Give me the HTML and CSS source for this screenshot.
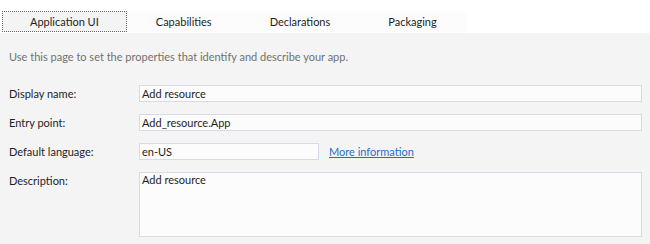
FILE: index.html
```html
<!DOCTYPE html>
<html lang="en">
  <head>
    <meta charset="UTF-8" />
    <title>Package.appxmanifest</title>
    <link rel="stylesheet" href="styles.css">
  </head>
  <body>
    <div class="tabs">
      <div class="tab active">Application UI</div>
      <div class="tab">Capabilities</div>
      <div class="tab">Declarations</div>
      <div class="tab">Packaging</div>
    </div>

    <div class="page">
      <p class="intro">Use this page to set the properties that identify and describe your app.</p>
      <div class="form">
        <label class="label">Display name:</label>
        <div class="field"><input type="text" class="box" value="Add resource" /></div>

        <label class="label">Entry point:</label>
        <div class="field"><input type="text" class="box" value="Add_resource.App" /></div>

        <label class="label">Default language:</label>
        <div class="field">
          <input type="text" class="box short" value="en-US" />
          <a href="#" class="link">More information</a>
        </div>

        <label class="label">Description:</label>
        <div class="field"><textarea class="box area">Add resource</textarea></div>
      </div>
    </div>
  </body>
</html>
```

FILE: styles.css
```css
body {
  margin: 0;
  font-family: Lato, "Noto Sans", sans-serif;
  font-size: 11px;
  color: #1e1e1e;
  background-color: #f4f4f4;
}
.tabs {
  display: flex;
  background-color: #fff;
  padding: 11px 0 0 2px;
}
.tab {
  height: 22px;
  line-height: 21px;
  padding: 0 29px;
  background-color: #fcfcfc;
  box-sizing: border-box;
}
.tab.active {
  background-color: #f4f4f4;
  border: 1px dotted #666;
  height: 21px;
  line-height: 19px;
  padding: 0 27px;
}
.page {
  padding: 16px 8px 0 9px;
}
.intro {
  margin: 0 0 20px 0;
  line-height: 16px;
  color: #717171;
}
.form {
  display: grid;
  grid-template-columns: 130px 1fr;
  row-gap: 12px;
}
.label {
  line-height: 17px;
}
.field {
  display: flex;
  align-items: center;
  gap: 10px;
}
.box {
  font-family: inherit;
  font-size: 11px;
  color: #1e1e1e;
  width: 100%;
  height: 17px;
  margin: 0;
  padding: 0 2px;
  box-sizing: border-box;
  border: 1px solid #dadae4;
  background-color: #fcfcfc;
  outline: none;
}
.box.short {
  width: 180px;
}
.box.area {
  height: 65px;
  padding: 0 2px;
  line-height: 14px;
  resize: none;
}
.link {
  color: #1e6fc7;
  white-space: nowrap;
}
```
